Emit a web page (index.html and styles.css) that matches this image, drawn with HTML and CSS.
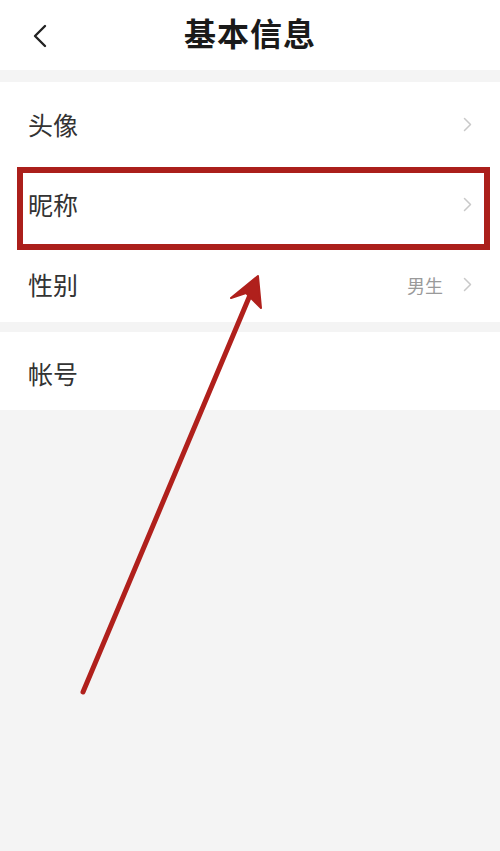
FILE: index.html
```html
<!DOCTYPE html>
<html lang="zh">
<head>
<meta charset="utf-8">
<title>基本信息</title>
<link rel="stylesheet" href="styles.css">
</head>
<body>
<div class="page">
  <header class="topbar">
    <svg class="back" viewBox="0 0 16 24" width="16" height="24"><path d="M13 2 L3 12 L13 22" fill="none" stroke="#222" stroke-width="2.4" stroke-linecap="round" stroke-linejoin="round"/></svg>
    <h1 class="title">基本信息</h1>
  </header>
  <section class="group first">
    <div class="row"><span class="label">头像</span><span class="right"><svg class="chev" viewBox="0 0 9 15" width="9" height="15"><path d="M1.5 1.5 L7.5 7.5 L1.5 13.5" fill="none" stroke="#c9c9c9" stroke-width="1.5" stroke-linecap="round" stroke-linejoin="round"/></svg></span></div>
    <div class="row"><span class="label">昵称</span><span class="right"><svg class="chev" viewBox="0 0 9 15" width="9" height="15"><path d="M1.5 1.5 L7.5 7.5 L1.5 13.5" fill="none" stroke="#c9c9c9" stroke-width="1.5" stroke-linecap="round" stroke-linejoin="round"/></svg></span></div>
    <div class="row"><span class="label">性别</span><span class="right"><span class="value">男生</span><svg class="chev" viewBox="0 0 9 15" width="9" height="15"><path d="M1.5 1.5 L7.5 7.5 L1.5 13.5" fill="none" stroke="#c9c9c9" stroke-width="1.5" stroke-linecap="round" stroke-linejoin="round"/></svg></span></div>
  </section>
  <section class="group second">
    <div class="row short"><span class="label">帐号</span></div>
  </section>
  <div class="highlight"></div>
  <svg class="arrow" viewBox="0 0 500 851" width="500" height="851">
    <line x1="83" y1="692" x2="253" y2="288" stroke="#b0201c" stroke-width="5" stroke-linecap="round"/>
    <path d="M258 276 L231 298 L246 293 L261 308 Z" fill="#b0201c" stroke="#b0201c" stroke-width="2" stroke-linejoin="round"/>
  </svg>
</div>
</body>
</html>
```
FILE: styles.css
```css
html, body {
  margin: 0;
  padding: 0;
}
body {
  background: #f4f4f4;
  font-family: "Noto Sans CJK SC", "Noto Sans", sans-serif;
  color: #333;
}
.page {
  position: relative;
  width: 500px;
  min-height: 851px;
}
.topbar {
  position: relative;
  height: 70px;
  box-sizing: border-box;
  padding-bottom: 6px;
  background: #fff;
  display: flex;
  align-items: center;
  justify-content: center;
}
.back {
  position: absolute;
  left: 32px;
  top: 24px;
}
.title {
  margin: 0;
  font-size: 32px;
  font-weight: 700;
  color: #1a1a1a;
  letter-spacing: 1px;
  line-height: 1;
}
.group {
  background: #fff;
}
.group.first {
  margin-top: 12px;
}
.group.second {
  margin-top: 10px;
}
.row {
  height: 80px;
  box-sizing: border-box;
  padding: 5px 28px 0 28px;
  display: flex;
  align-items: center;
  justify-content: space-between;
}
.row.short {
  height: 78px;
}
.label {
  font-size: 25px;
  color: #333;
  line-height: 1;
}
.right {
  display: flex;
  align-items: center;
  gap: 20px;
}
.value {
  font-size: 18px;
  color: #9a9a9a;
}
.chev {
  display: block;
}
.highlight {
  position: absolute;
  left: 17px;
  top: 167px;
  width: 473px;
  height: 83px;
  box-sizing: border-box;
  border: 6px solid #ab1f1b;
}
.arrow {
  position: absolute;
  left: 0;
  top: 0;
  pointer-events: none;
}
```
